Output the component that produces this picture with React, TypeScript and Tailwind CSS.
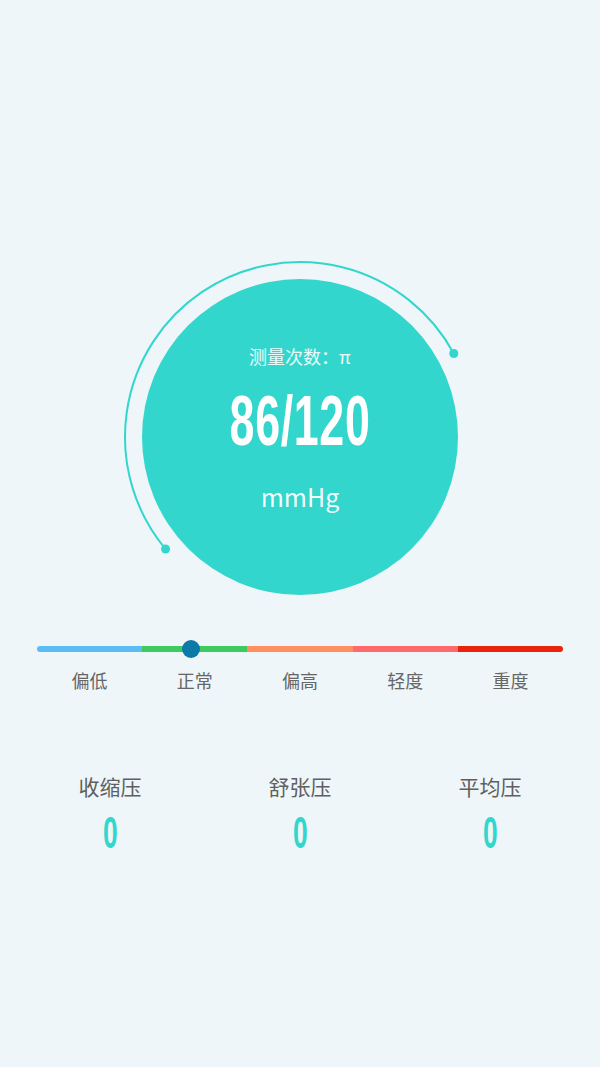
const levels = [
  { label: "偏低", color: "bg-[#5cbdf4]" },
  { label: "正常", color: "bg-[#3fca60]" },
  { label: "偏高", color: "bg-[#ff8f5f]" },
  { label: "轻度", color: "bg-[#ff6b6d]" },
  { label: "重度", color: "bg-[#e7250d]" },
];

const stats = ["收缩压", "舒张压", "平均压"];

const cjk = "font-['Noto_Sans_CJK_SC','Noto_Sans',sans-serif]";
const num = "font-['Liberation_Sans_Narrow','Liberation_Sans',sans-serif]";

// outer ring: radius 175 around (180,180), from 140deg to 331.5deg (screen angles)
const R = 175;
const pt = (deg: number) => {
  const a = (deg * Math.PI) / 180;
  return [180 + R * Math.cos(a), 180 + R * Math.sin(a)];
};
const [sx, sy] = pt(140.2);
const [ex, ey] = pt(331.5);

const Gauge = () => (
  <div className="relative mx-auto flex h-[360px] w-[360px] items-center justify-center">
    <svg className="absolute inset-0" width="360" height="360" viewBox="0 0 360 360">
      <path
        d={`M ${sx} ${sy} A ${R} ${R} 0 1 1 ${ex} ${ey}`}
        fill="none"
        stroke="#33d6cc"
        strokeWidth="2"
      />
      <circle cx={sx} cy={sy} r="4.5" fill="#33d6cc" />
      <circle cx={ex} cy={ey} r="4.5" fill="#33d6cc" />
    </svg>
    <div className="flex h-[316px] w-[316px] flex-col items-center rounded-full bg-[#33d6cc] pt-[65px] text-white">
      <div className={`${cjk} text-[18px] leading-6 text-white/90`}>测量次数：π</div>
      <div
        className={`${num} mt-[23px] origin-center scale-x-[0.64] text-[70px] font-bold leading-[60px] tracking-[1px]`}
      >
        86/120
      </div>
      <div className={`${cjk} mt-[29px] text-[25px] leading-8 text-white/95`}>mmHg</div>
    </div>
  </div>
);

const App = () => {
  return (
    <div className="min-h-screen bg-[#eef6f9] pt-[257px]">
      <Gauge />

      <div className="mx-[37px] mt-[29px]">
        <div className="relative flex h-[6px]">
          {levels.map((l, i) => (
            <div
              key={l.label}
              className={`h-full flex-1 ${l.color} ${i === 0 ? "rounded-l-full" : ""} ${
                i === levels.length - 1 ? "rounded-r-full" : ""
              }`}
            />
          ))}
          <span className="absolute left-[145px] top-[-6px] h-[18px] w-[18px] rounded-full bg-[#0b7aa6]" />
        </div>
        <div className={`${cjk} mt-[16px] grid grid-cols-5 text-center text-[18px] leading-6 text-[#666666]`}>
          {levels.map((l) => (
            <div key={l.label}>{l.label}</div>
          ))}
        </div>
      </div>

      <div className="mt-[80px] grid grid-cols-3 px-[15px]">
        {stats.map((s) => (
          <div key={s} className="flex flex-col items-center">
            <div className={`${cjk} text-[21px] leading-7 text-[#5f5f5f]`}>{s}</div>
            <div className={`${num} mt-[13px] scale-x-[0.6] text-[44px] font-bold leading-[40px] text-[#33d6cc]`}>
              0
            </div>
          </div>
        ))}
      </div>
    </div>
  );
};

export default App;
